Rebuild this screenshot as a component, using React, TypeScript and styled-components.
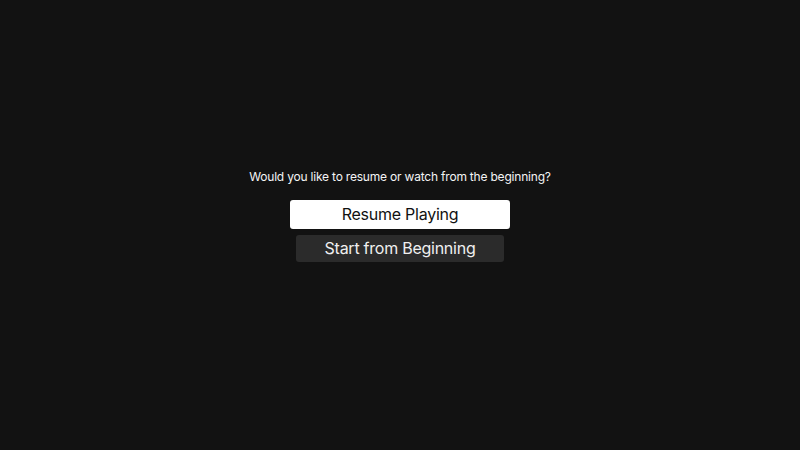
import React from 'react';
import styled, { createGlobalStyle } from 'styled-components';

const GlobalStyle = createGlobalStyle`
	html, body {
		margin: 0;
		padding: 0;
		background: #121212;
	}
	#root {
		height: 100vh;
	}
`;

const Screen = styled.div`
	width: 100%;
	height: 100%;
	background: #121212;
	display: flex;
	flex-direction: column;
	align-items: center;
	justify-content: center;
	font-family: Inter, "Noto Sans", sans-serif;
	padding-bottom: 19px;
	box-sizing: border-box;
`;

const Prompt = styled.div`
	color: #f4f4f4;
	font-size: 12px;
	letter-spacing: -0.2px;
	line-height: 16px;
	margin-bottom: 15px;
`;

const Options = styled.div`
	display: flex;
	flex-direction: column;
	align-items: center;
	gap: 6px;
`;

const Option = styled.button<{ $focused?: boolean }>`
	font-family: inherit;
	border: none;
	border-radius: 3px;
	display: flex;
	align-items: center;
	justify-content: center;
	font-size: 16px;
	letter-spacing: -0.25px;
	width: ${p => (p.$focused ? '220px' : '208px')};
	height: ${p => (p.$focused ? '29px' : '27px')};
	background: ${p => (p.$focused ? '#ffffff' : '#2b2b2b')};
	color: ${p => (p.$focused ? '#111111' : '#f0f0f0')};
	padding: 0 0 2px;
	cursor: pointer;
`;

const App = () => {
	return (
		<>
			<GlobalStyle />
			<Screen>
				<Prompt>Would you like to resume or watch from the beginning?</Prompt>
				<Options>
					<Option $focused>Resume Playing</Option>
					<Option>Start from Beginning</Option>
				</Options>
			</Screen>
		</>
	);
};

export default App;
